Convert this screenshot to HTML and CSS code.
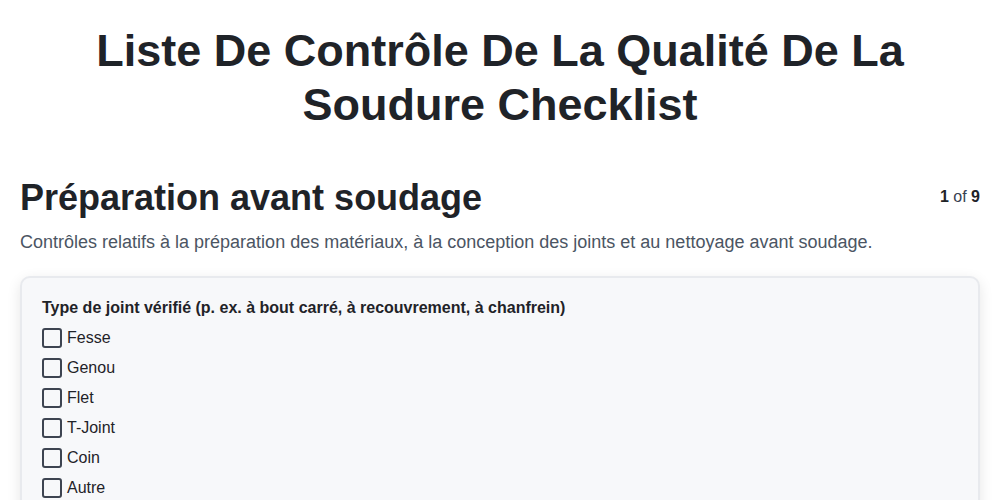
FILE: index.html
```html
<!DOCTYPE html>
<html lang="fr">
<head>
<meta charset="utf-8">
<link rel="stylesheet" href="styles.css">
</head>
<body>
<div class="page">
  <h1 class="title">Liste De Contrôle De La Qualité De La Soudure Checklist</h1>
  <div class="section-head">
    <h2 class="section-title">Préparation avant soudage</h2>
    <div class="pager"><b>1</b> of <b>9</b></div>
  </div>
  <p class="section-desc">Contrôles relatifs à la préparation des matériaux, à la conception des joints et au nettoyage avant soudage.</p>
  <div class="card">
    <div class="q-label">Type de joint vérifié (p. ex. à bout carré, à recouvrement, à chanfrein)</div>
    <ul class="options">
      <li class="option"><span class="box"></span><span>Fesse</span></li>
      <li class="option"><span class="box"></span><span>Genou</span></li>
      <li class="option"><span class="box"></span><span>Flet</span></li>
      <li class="option"><span class="box"></span><span>T-Joint</span></li>
      <li class="option"><span class="box"></span><span>Coin</span></li>
      <li class="option"><span class="box"></span><span>Autre</span></li>
    </ul>
  </div>
</div>
</body>
</html>
```
FILE: styles.css
```css
* { box-sizing: border-box; }
html, body { margin: 0; padding: 0; background: #ffffff; }
body { font-family: "Liberation Sans", Arial, sans-serif; color: #1f2328; }
.page { padding: 24px 20px 0 20px; }
.title {
  margin: 0 auto;
  max-width: 860px;
  text-align: center;
  font-size: 45px;
  line-height: 54px;
  font-weight: 700;
  color: #1f2328;
}
.section-head {
  display: flex;
  justify-content: space-between;
  align-items: flex-start;
  margin-top: 44px;
}
.section-title {
  margin: 0;
  font-size: 36px;
  line-height: 44px;
  font-weight: 700;
  color: #1f2328;
}
.pager { font-size: 16px; line-height: 20px; margin-top: 11px; color: #374151; }
.pager b { color: #1f2328; }
.section-desc {
  margin: 10px 0 0 0;
  font-size: 18px;
  line-height: 24px;
  color: #4b5563;
}
.card {
  margin-top: 22px;
  background: #f7f8fa;
  border: 2px solid #e8eaee;
  border-radius: 10px;
  box-shadow: 0 4px 14px rgba(0,0,0,0.10);
  padding: 20px 20px 20px 20px;
  min-height: 300px;
}
.q-label { font-size: 16px; font-weight: 700; line-height: 20px; color: #1f2328; }
.options { list-style: none; margin: 5px 0 0 0; padding: 0; }
.option {
  display: flex;
  align-items: center;
  gap: 5px;
  height: 30px;
  font-size: 16px;
  color: #1f2328;
}
.box {
  width: 20px;
  height: 20px;
  border: 2px solid #3d4451;
  border-radius: 3px;
  background: #f7f8fa;
  flex: none;
}
```
